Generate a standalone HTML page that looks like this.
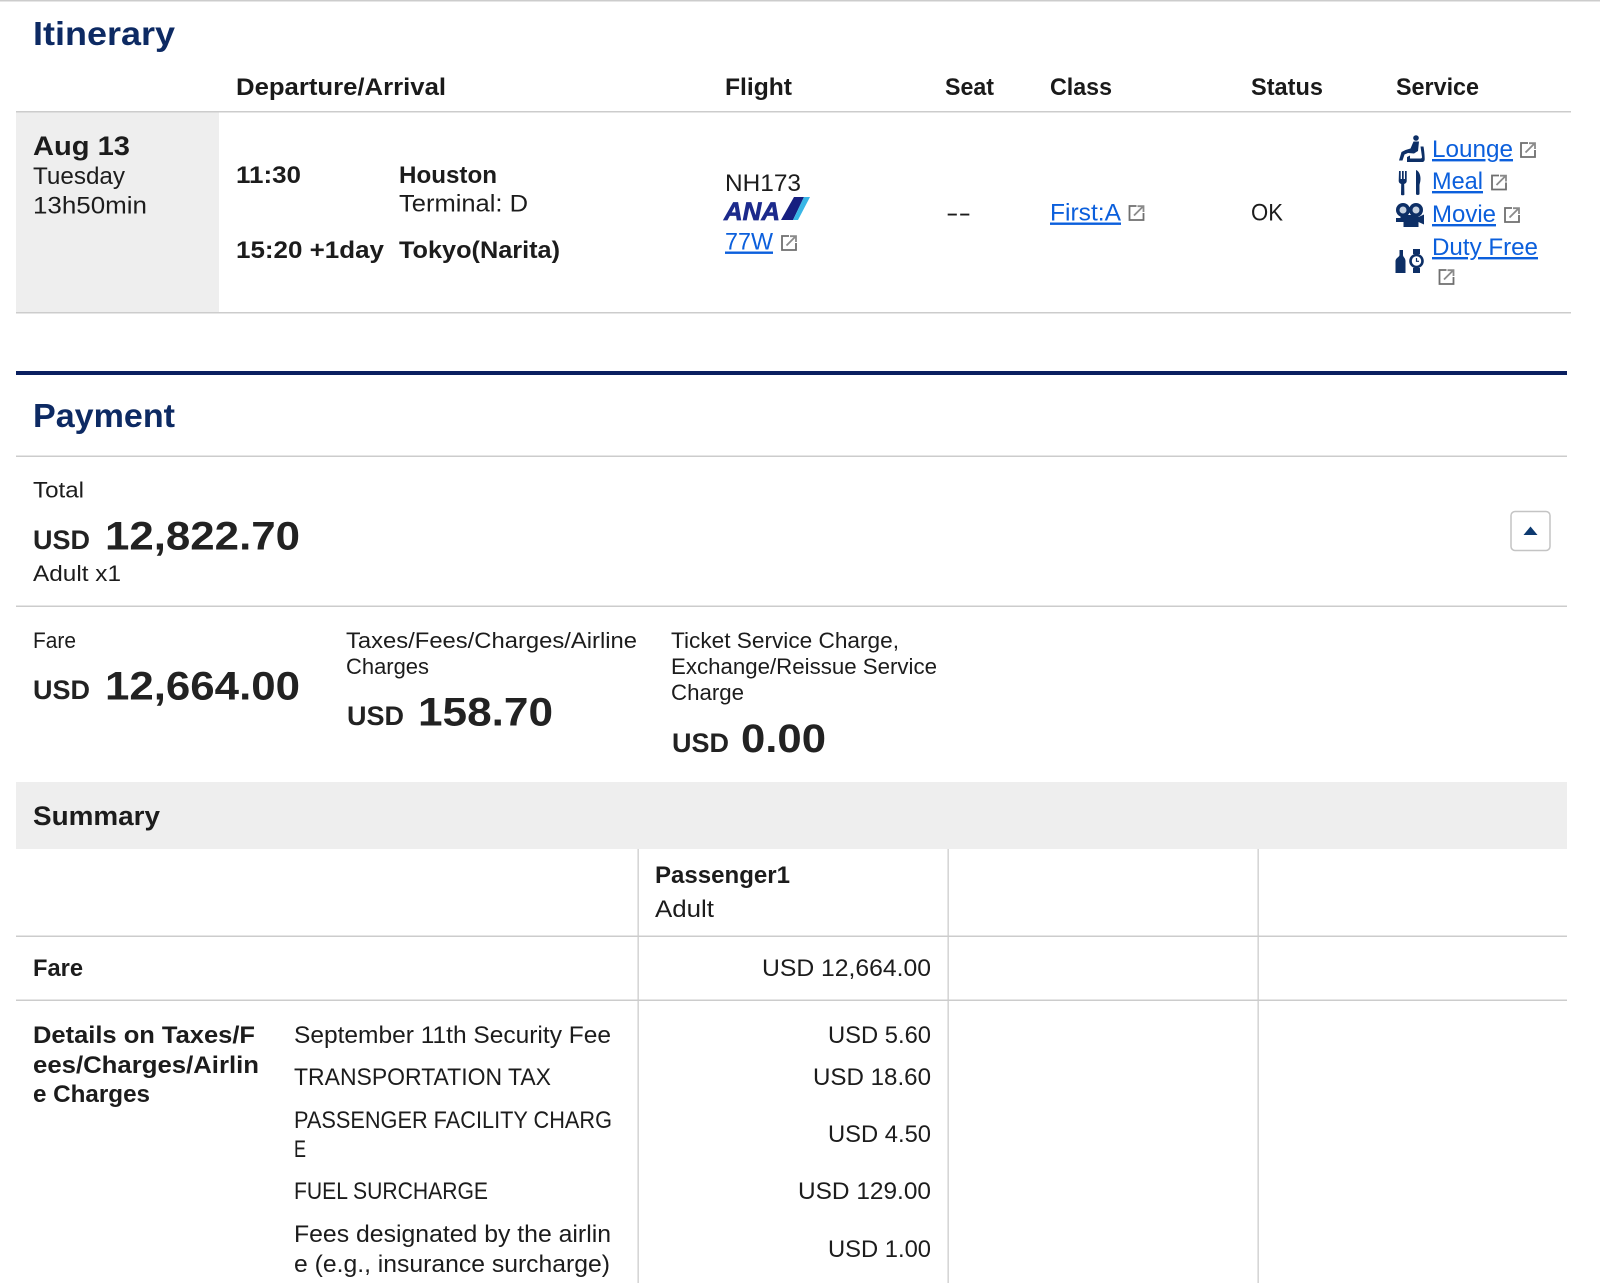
<!DOCTYPE html>
<html lang="en">
<head>
<meta charset="utf-8">
<title>Itinerary and Payment</title>
<style>
html,body{margin:0;padding:0;background:#fff;width:1600px;height:1283px;overflow:hidden}
svg{display:block;filter:blur(.35px)}
text{font-family:"Liberation Sans",sans-serif;fill:#1c1c1c}
.h{font-size:33px;font-weight:700;fill:#0d2a63}
.th{font-size:24px;font-weight:700;fill:#1a1a1a}
.r{font-size:24px}
.s{font-size:22px}
.b{font-size:24px;font-weight:700}
.d{font-size:27px;font-weight:700}
.l{font-size:24px;fill:#0b5fdc;text-decoration:underline}
.u{font-size:27px;font-weight:700;fill:#222}
.a{font-size:40px;font-weight:700;fill:#222}
.i{fill:#0d2f66}
</style>
</head>
<body>
<svg width="1600" height="1283" viewBox="0 0 1600 1283" xmlns="http://www.w3.org/2000/svg">
<defs>
<g id="ext" fill="none" stroke="#6f6f6f" stroke-width="1.800">
<path d="M8 1H1V15H15V8"/>
<path d="M5.500 10.500L14.500 1.500M9 1.200H15V7" stroke="#8a8a8a"/>
</g>
</defs>
<rect width="1600" height="1283" fill="#fff"/>
<rect x="0" y="0" width="1600" height="1.500" fill="#ccc"/>

<!-- Itinerary -->
<text class="h" x="33" y="45" textLength="142" lengthAdjust="spacingAndGlyphs">Itinerary</text>
<text class="th" x="236" y="95" textLength="210" lengthAdjust="spacingAndGlyphs">Departure/Arrival</text>
<text class="th" x="725" y="95" textLength="67" lengthAdjust="spacingAndGlyphs">Flight</text>
<text class="th" x="945" y="95" textLength="49" lengthAdjust="spacingAndGlyphs">Seat</text>
<text class="th" x="1050" y="95" textLength="62" lengthAdjust="spacingAndGlyphs">Class</text>
<text class="th" x="1251" y="95" textLength="72" lengthAdjust="spacingAndGlyphs">Status</text>
<text class="th" x="1396" y="95" textLength="83" lengthAdjust="spacingAndGlyphs">Service</text>
<rect x="16" y="111" width="1555" height="1.500" fill="#ccc"/>
<rect x="16" y="112.500" width="203" height="199.500" fill="#eee"/>
<rect x="16" y="312" width="1555" height="1.500" fill="#ccc"/>

<text class="d" x="33" y="155" textLength="97" lengthAdjust="spacingAndGlyphs">Aug 13</text>
<text class="r" x="33" y="184" textLength="92" lengthAdjust="spacingAndGlyphs">Tuesday</text>
<text class="r" x="33" y="213.500" textLength="114" lengthAdjust="spacingAndGlyphs">13h50min</text>

<text class="b" x="236" y="183" textLength="65" lengthAdjust="spacingAndGlyphs">11:30</text>
<text class="b" x="399" y="183" textLength="98" lengthAdjust="spacingAndGlyphs">Houston</text>
<text class="r" x="399" y="211.500" textLength="129" lengthAdjust="spacingAndGlyphs">Terminal: D</text>
<text class="b" x="236" y="258" textLength="148" lengthAdjust="spacingAndGlyphs">15:20 +1day</text>
<text class="b" x="399" y="258" textLength="161" lengthAdjust="spacingAndGlyphs">Tokyo(Narita)</text>

<text class="r" x="725" y="191" textLength="76" lengthAdjust="spacingAndGlyphs">NH173</text>
<text x="724" y="220" style="font-size:25px;font-weight:700;font-style:italic;fill:#1c2a8c;stroke:#1c2a8c;stroke-width:.7px" textLength="56" lengthAdjust="spacingAndGlyphs">ANA</text>
<polygon points="781,220 794,197 804,197 793,220" fill="#161f80"/>
<polygon points="804,197 810,197 798,220 793,220" fill="#39b6e6"/>
<text class="l" x="725" y="249.500" textLength="48" lengthAdjust="spacingAndGlyphs">77W</text>
<use href="#ext" x="781" y="235"/>

<text class="r" x="946" y="221" textLength="25" lengthAdjust="spacingAndGlyphs">--</text>
<text class="l" x="1050" y="220.500" textLength="71" lengthAdjust="spacingAndGlyphs">First:A</text>
<use href="#ext" x="1128.500" y="205"/>
<text class="r" x="1251" y="220.500" textLength="32" lengthAdjust="spacingAndGlyphs">OK</text>

<!-- Lounge icon -->
<g class="i">
<circle cx="1416" cy="138" r="2.800"/>
<path d="M1413.500 141.500h5.500l-1 9.500-4 2.500-6-.5-3.500 1.500-2 6h-3.500l2.500-8.500 4-2 5-1.500z"/>
<path d="M1420.500 146.500h3c.7 4 1.200 9 1.200 12.500 0 2-1 3-2.500 3h-15.200v-5l3-1.500v3h10.500c1 0 1.500-.5 1.500-1.500z"/>
</g>
<!-- Meal icon -->
<g class="i">
<path d="M1399 171h1.700v8h1.300v-8h1.700v8h1.300v-8h1.700v10c0 1.500-1 2.500-2.500 3l.2 10.500c0 1-3.400 1-3.400 0l.2-10.500c-1.500-.5-2.500-1.500-2.500-3z"/>
<path d="M1416 170c3 1 4.500 5 4.500 9 0 3-1 5-1 6v9c0 1.300-3.500 1.300-3.500 0z"/>
</g>
<!-- Movie icon -->
<g>
<circle class="i" cx="1403" cy="210" r="7"/>
<circle class="i" cx="1416" cy="210" r="7"/>
<circle cx="1403" cy="210" r="3.500" fill="#c7d2e0"/>
<circle cx="1416" cy="210" r="3.500" fill="#c7d2e0"/>
<path class="i" d="M1396 218h4.500v-3h18v2l5.500-2.500v10l-5.500-2.500v5h-15v-5h-7.500z"/>
</g>
<!-- Duty free icon -->
<g>
<path class="i" d="M1399.500 250h3.500v5c0 2 2.500 3 2.500 6v12h-10v-12c0-3 4-4 4-6z"/>
<rect class="i" x="1413" y="249" width="7" height="5"/>
<rect class="i" x="1413" y="268" width="7" height="5"/>
<circle class="i" cx="1416.500" cy="261" r="7.300"/>
<circle cx="1416.500" cy="261" r="4.700" fill="#fff"/>
<path d="M1416.500 258v3.300h2.500" stroke="#0d2f66" stroke-width="1.200" fill="none"/>
</g>

<text class="l" x="1432" y="157" textLength="81" lengthAdjust="spacingAndGlyphs">Lounge</text>
<use href="#ext" x="1520" y="142"/>
<text class="l" x="1432" y="189" textLength="51" lengthAdjust="spacingAndGlyphs">Meal</text>
<use href="#ext" x="1491" y="174.500"/>
<text class="l" x="1432" y="222" textLength="64" lengthAdjust="spacingAndGlyphs">Movie</text>
<use href="#ext" x="1504" y="207"/>
<text class="l" x="1432" y="255" textLength="106" lengthAdjust="spacingAndGlyphs">Duty Free</text>
<use href="#ext" x="1438.500" y="269"/>

<!-- Payment -->
<rect x="16" y="371" width="1551" height="4" fill="#0a2060"/>
<text class="h" x="33" y="427" textLength="142" lengthAdjust="spacingAndGlyphs">Payment</text>
<rect x="16" y="455.500" width="1551" height="1.500" fill="#ccc"/>

<text class="s" x="33" y="497.500" textLength="51" lengthAdjust="spacingAndGlyphs">Total</text>
<text class="u" x="33" y="549" textLength="57" lengthAdjust="spacingAndGlyphs">USD</text>
<text class="a" x="105" y="549.500" textLength="195" lengthAdjust="spacingAndGlyphs">12,822.70</text>
<text class="s" x="33" y="581" textLength="88" lengthAdjust="spacingAndGlyphs">Adult x1</text>

<rect x="1511" y="511.500" width="39" height="39" rx="4" fill="#fff" stroke="#c4c4c4" stroke-width="1.500"/>
<polygon points="1530.500,526.500 1537.500,535 1523.500,535" fill="#0d3a70"/>

<rect x="16" y="605.500" width="1551" height="1.500" fill="#ccc"/>

<text class="s" x="33" y="648" textLength="43" lengthAdjust="spacingAndGlyphs">Fare</text>
<text class="u" x="33" y="699" textLength="57" lengthAdjust="spacingAndGlyphs">USD</text>
<text class="a" x="105" y="699.500" textLength="195" lengthAdjust="spacingAndGlyphs">12,664.00</text>

<text class="s" x="346" y="648" textLength="291" lengthAdjust="spacingAndGlyphs">Taxes/Fees/Charges/Airline</text>
<text class="s" x="346" y="674" textLength="83" lengthAdjust="spacingAndGlyphs">Charges</text>
<text class="u" x="347" y="725" textLength="57" lengthAdjust="spacingAndGlyphs">USD</text>
<text class="a" x="418" y="725.500" textLength="135" lengthAdjust="spacingAndGlyphs">158.70</text>

<text class="s" x="671" y="648" textLength="228" lengthAdjust="spacingAndGlyphs">Ticket Service Charge,</text>
<text class="s" x="671" y="674" textLength="266" lengthAdjust="spacingAndGlyphs">Exchange/Reissue Service</text>
<text class="s" x="671" y="700" textLength="73" lengthAdjust="spacingAndGlyphs">Charge</text>
<text class="u" x="672" y="752" textLength="57" lengthAdjust="spacingAndGlyphs">USD</text>
<text class="a" x="741" y="752" textLength="85" lengthAdjust="spacingAndGlyphs">0.00</text>

<!-- Summary -->
<rect x="16" y="782" width="1551" height="67" fill="#eee"/>
<text x="33" y="825" style="font-size:27px;font-weight:700" textLength="127" lengthAdjust="spacingAndGlyphs">Summary</text>

<rect x="637.500" y="849" width="1.300" height="434" fill="#ccc"/>
<rect x="947.500" y="849" width="1.300" height="434" fill="#ccc"/>
<rect x="1257.500" y="849" width="1.300" height="434" fill="#ccc"/>
<rect x="16" y="935.500" width="1551" height="1.500" fill="#ccc"/>
<rect x="16" y="999.500" width="1551" height="1.500" fill="#ccc"/>

<text class="b" x="655" y="883" textLength="135" lengthAdjust="spacingAndGlyphs">Passenger1</text>
<text class="r" x="655" y="917" textLength="59" lengthAdjust="spacingAndGlyphs">Adult</text>

<text class="b" x="33" y="976" textLength="50" lengthAdjust="spacingAndGlyphs">Fare</text>
<text class="r" x="762" y="976" textLength="169" lengthAdjust="spacingAndGlyphs">USD 12,664.00</text>

<text class="b" x="33" y="1043" textLength="222" lengthAdjust="spacingAndGlyphs">Details on Taxes/F</text>
<text class="b" x="33" y="1073" textLength="226" lengthAdjust="spacingAndGlyphs">ees/Charges/Airlin</text>
<text class="b" x="33" y="1102" textLength="117" lengthAdjust="spacingAndGlyphs">e Charges</text>

<text class="r" x="294" y="1043" textLength="317" lengthAdjust="spacingAndGlyphs">September 11th Security Fee</text>
<text class="r" x="294" y="1085" textLength="257" lengthAdjust="spacingAndGlyphs">TRANSPORTATION TAX</text>
<text class="r" x="294" y="1128" textLength="318" lengthAdjust="spacingAndGlyphs">PASSENGER FACILITY CHARG</text>
<text class="r" x="294" y="1157" textLength="12" lengthAdjust="spacingAndGlyphs">E</text>
<text class="r" x="294" y="1199" textLength="194" lengthAdjust="spacingAndGlyphs">FUEL SURCHARGE</text>
<text class="r" x="294" y="1242" textLength="317" lengthAdjust="spacingAndGlyphs">Fees designated by the airlin</text>
<text class="r" x="294" y="1272" textLength="316" lengthAdjust="spacingAndGlyphs">e (e.g., insurance surcharge)</text>

<text class="r" x="828" y="1043" textLength="103" lengthAdjust="spacingAndGlyphs">USD 5.60</text>
<text class="r" x="813" y="1085" textLength="118" lengthAdjust="spacingAndGlyphs">USD 18.60</text>
<text class="r" x="828" y="1142" textLength="103" lengthAdjust="spacingAndGlyphs">USD 4.50</text>
<text class="r" x="798" y="1199" textLength="133" lengthAdjust="spacingAndGlyphs">USD 129.00</text>
<text class="r" x="828" y="1257" textLength="103" lengthAdjust="spacingAndGlyphs">USD 1.00</text>
</svg>
</body>
</html>
